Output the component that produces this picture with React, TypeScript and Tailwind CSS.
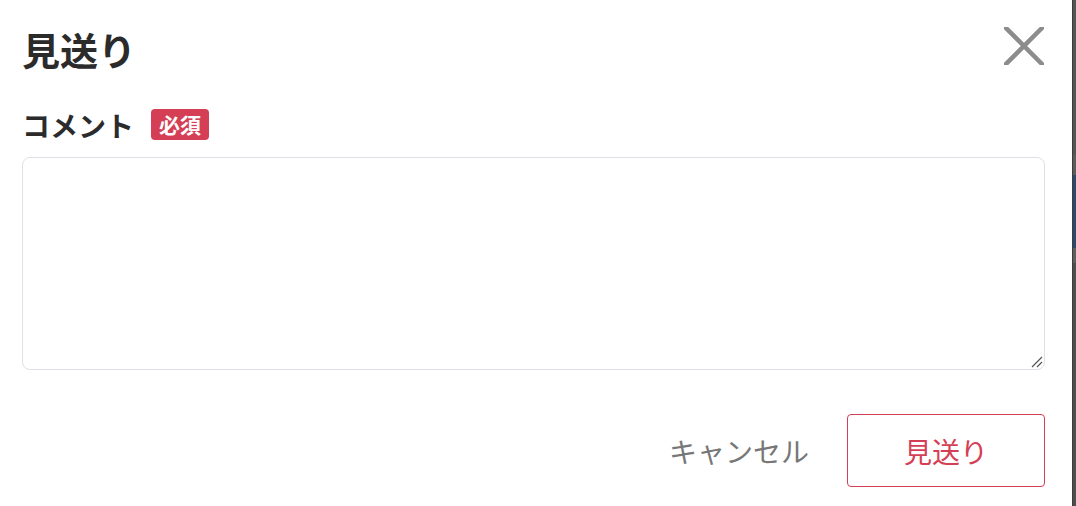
// 見送り dialog: comment is required before passing on a candidate
function CloseIcon() {
  return (
    <svg width="40" height="38" viewBox="0 0 40 38" className="text-[#8c8c8c]">
      <path d="M2 1 38 37M38 1 2 37" stroke="currentColor" strokeWidth="4.5" strokeLinecap="square" />
    </svg>
  );
}

function ResizeHandle() {
  return (
    <svg width="12" height="12" viewBox="0 0 12 12" className="absolute bottom-[2px] right-[2px] text-[#555]">
      <path d="M1 11 11 1M6 11 11 6" stroke="currentColor" strokeWidth="1.2" />
    </svg>
  );
}

export default function App() {
  return (
    <div
      className="flex w-[1076px] h-[506px] overflow-hidden bg-white"
      style={{ fontFamily: '"Noto Sans CJK JP", "Noto Sans", sans-serif' }}
    >
      <div className="flex-1 flex flex-col pl-[22px] pr-[27px] pt-[30px]">
        <div className="flex items-start justify-between">
          <h1 className="text-[38px] leading-none font-bold text-[#2b2b2b]">見送り</h1>
          <button className="mr-[1px] mt-[-3px]" aria-label="close">
            <CloseIcon />
          </button>
        </div>

        <div className="mt-[41px] flex items-center gap-[17px]">
          <span className="text-[28px] leading-none font-bold text-[#2b2b2b]">コメント</span>
          <span className="flex h-[31px] w-[58px] items-center justify-center rounded-[4px] bg-[#d43f55] text-[21px] font-bold leading-none text-white">
            必須
          </span>
        </div>

        <div className="relative mt-[17px]">
          <textarea className="block h-[213px] w-full resize-none rounded-[8px] border border-[#dde1e5] outline-none" />
          <ResizeHandle />
        </div>

        <div className="mt-[44px] flex items-center justify-end gap-[38px]">
          <button className="text-[28px] leading-none text-[#777]">キャンセル</button>
          <button className="flex h-[73px] w-[198px] items-center justify-center rounded-[4px] border border-[#d43f55] text-[28px] leading-none text-[#d43f55]">
            見送り
          </button>
        </div>
      </div>

      {/* page behind the dialog, visible past its right edge */}
      <div className="flex w-[4px] flex-col border-l border-[#3c3c3c]">
        <div className="h-[155px] bg-[#555]" />
        <div className="h-[20px] bg-[#5c5c5c]" />
        <div className="h-[73px] bg-[#2d4869]" />
        <div className="h-[15px] bg-[#5e5e5e]" />
        <div className="flex-1 bg-[#4e4e4e]" />
      </div>
    </div>
  );
}
